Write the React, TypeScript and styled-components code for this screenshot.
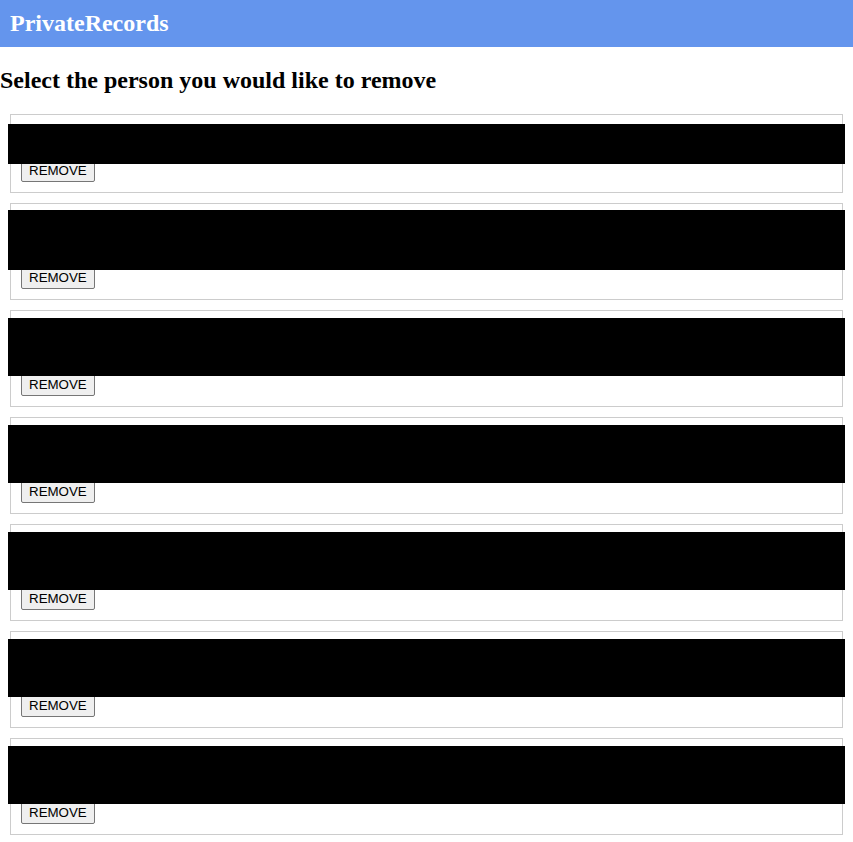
import React from "react";
import styled, { createGlobalStyle } from "styled-components";

const Global = createGlobalStyle`
  html, body { margin: 0; padding: 0; background: #ffffff; }
  body { font-family: "Liberation Serif", "Times New Roman", serif; color: #000; }
`;

const Header = styled.header`
  background: #6495ed;
  padding: 10px;
`;

const Brand = styled.h1`
  margin: 0;
  color: #ffffff;
  font-family: "Liberation Serif", "Times New Roman", serif;
  font-size: 24px;
  font-weight: bold;
  line-height: 27px;
`;

const Title = styled.h2`
  margin: 20px 0;
  font-family: "Liberation Serif", "Times New Roman", serif;
  font-size: 24px;
  font-weight: bold;
  line-height: 27px;
`;

const List = styled.main`
  display: flex;
  flex-direction: column;
  gap: 10px;
  margin: 0 10px 10px;
`;

const Card = styled.section`
  position: relative;
  border: 1px solid #cccccc;
  padding: 10px;
`;

const Details = styled.div<{ $h: number }>`
  height: ${(p) => p.$h}px;
  font-size: 16px;
  line-height: 18px;
`;

const Redaction = styled.div<{ $top: number; $h: number }>`
  position: absolute;
  left: -3px;
  right: -3px;
  top: ${(p) => p.$top}px;
  height: ${(p) => p.$h}px;
  background: #000000;
`;

const RemoveButton = styled.button`
  display: block;
  font-family: "Liberation Sans", Arial, sans-serif;
  font-size: 13.333px;
  line-height: 16px;
  padding: 2px 7px;
  color: #000;
  background: #efefef;
  border: 1px solid #767676;
  border-radius: 2px;
  height: 22px;
  box-sizing: border-box;
  cursor: pointer;
`;

const people = [
  { id: 1, details: 35, barTop: 9, barH: 40 },
  { id: 2, details: 53, barTop: 6, barH: 60 },
  { id: 3, details: 53, barTop: 7, barH: 58 },
  { id: 4, details: 53, barTop: 7, barH: 58 },
  { id: 5, details: 53, barTop: 7, barH: 58 },
  { id: 6, details: 53, barTop: 7, barH: 58 },
  { id: 7, details: 53, barTop: 7, barH: 58 },
];

export default function App() {
  return (
    <>
      <Global />
      <Header>
        <Brand>PrivateRecords</Brand>
      </Header>
      <Title>Select the person you would like to remove</Title>
      <List>
        {people.map((p) => (
          <Card key={p.id}>
            <Details $h={p.details} />
            <RemoveButton type="button">REMOVE</RemoveButton>
            <Redaction $top={p.barTop} $h={p.barH} />
          </Card>
        ))}
      </List>
    </>
  );
}
